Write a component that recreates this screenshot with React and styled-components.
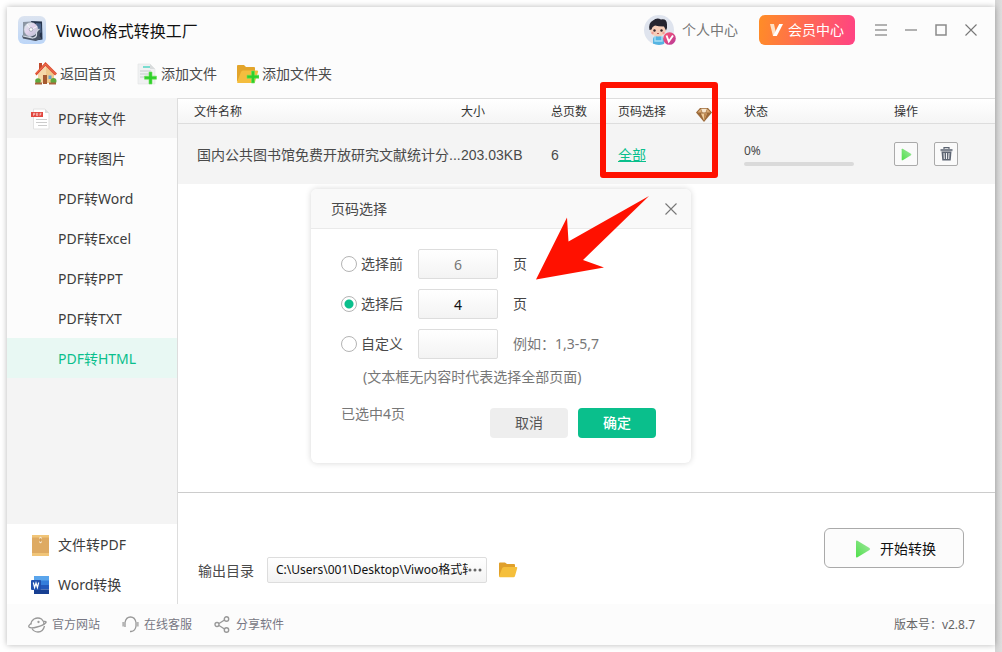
import React, { useState } from "react";
import styled, { createGlobalStyle, css } from "styled-components";

const sans = `"Noto Sans", "Noto Sans CJK SC", sans-serif`;
const line = "#dddddd";
const green = "#0abf8c";

const GlobalStyle = createGlobalStyle`
  *, *::before, *::after { box-sizing: border-box; }
  body { margin: 0; background: #fff; font: 14px/20px ${sans}; color: #4a4a4a; }
  button, input { font: inherit; color: inherit; margin: 0; }
  button { padding: 0; cursor: pointer; }
  svg { display: block; flex: none; }
`;

const Page = styled.div`
  min-height: 100vh;
  padding: 7px;
  display: flex;
  background: linear-gradient(to left, #dedede, #d4d4d4 7px, transparent 7px);
`;

const Window = styled.div`
  position: relative;
  flex: 1;
  min-width: 0;
  display: flex;
  flex-direction: column;
  background: #fcfcfc;
  box-shadow: 0 0 6px rgba(0, 0, 0, 0.28);
`;

const TitleBar = styled.header`
  display: flex;
  align-items: center;
  height: 46px;
  padding: 0 18px 0 11px;
`;

const Title = styled.h1`
  flex: 1;
  margin: 0 0 0 10px;
  padding-top: 2px;
  font-size: 16px;
  line-height: 24px;
  font-weight: 400;
  color: #111;
`;

const Account = styled.a`
  display: flex;
  align-items: center;
  gap: 6px;
  color: #777;
  text-decoration: none;
`;

const VipButton = styled.button`
  display: flex;
  align-items: center;
  justify-content: center;
  gap: 5px;
  width: 96px;
  height: 30px;
  margin: 0 20px 0 21px;
  border: 0;
  border-radius: 6px;
  color: #fff;
  background: linear-gradient(100deg, #ff8d26, #ff4285);
`;

const WindowControls = styled.div`
  display: flex;
  gap: 18px;
`;

const IconButton = styled.button`
  display: flex;
  border: 0;
  background: none;
`;

const Toolbar = styled.nav`
  display: flex;
  align-items: center;
  gap: 20px;
  height: 45px;
  padding: 0 27px 4px;
`;

const Tool = styled.button`
  display: flex;
  align-items: center;
  gap: 3px;
  border: 0;
  background: none;
`;

const Body = styled.div`
  flex: 1;
  display: grid;
  grid-template-columns: 171px minmax(0, 1fr);
`;

const Sidebar = styled.aside`
  display: flex;
  flex-direction: column;
  border-right: 1px solid ${line};
  background: #f4f4f4;
`;

const SideGroup = styled.div`
  background: ${(p) => (p.$bottom ? "#fff" : "#fcfcfc")};
  margin-top: ${(p) => (p.$bottom ? "auto" : "0")};
`;

const SideItem = styled.a`
  display: flex;
  align-items: center;
  gap: 7px;
  height: 40px;
  padding: 2px 0 0 ${(p) => (p.$sub ? "51px" : "24px")};
  color: #3c3c3c;
  text-decoration: none;
  ${(p) => p.$open && css`background: #f4f4f4;`}
  ${(p) => p.$active && css`color: ${green}; background: #e8f8f3;`}
`;

const Content = styled.main`
  position: relative;
  display: flex;
  flex-direction: column;
  background: #fff;
`;

const FileTable = styled.table`
  width: 100%;
  table-layout: fixed;
  border-collapse: separate;
  border-spacing: 0;
  text-align: left;
`;

const Th = styled.th`
  height: 26px;
  padding: 2px 0 0 ${(p) => (p.$first ? "16px" : "0")};
  width: ${(p) => p.$width || "auto"};
  border: solid ${line};
  border-width: 1px 0;
  background: linear-gradient(#fff, #f5f5f5);
  font-size: 12px;
  font-weight: 400;
  color: #333;
`;

const Td = styled.td`
  height: 60px;
  padding: ${(p) => (p.$controls ? "0" : "2px")} 0 0 ${(p) => (p.$first ? "19px" : "0")};
  background: #f4f4f4;
  font-family: "Liberation Sans", "Noto Sans CJK SC", sans-serif;
  white-space: nowrap;
`;

const ThSplit = styled.div`
  display: flex;
  align-items: flex-end;
  justify-content: space-between;
  padding-right: 32px;
`;

const PageLink = styled.a`
  color: ${green};
`;

const Progress = styled.div`
  padding-top: 2px;
  font: 12px/16px ${sans};
`;

const Track = styled.div`
  width: 110px;
  height: 4px;
  margin: 3px 0 4px;
  border-radius: 2px;
  background: #dadada;
`;

const Actions = styled.div`
  display: flex;
  gap: 16px;
`;

const SquareButton = styled.button`
  display: grid;
  place-items: center;
  width: 24px;
  height: 24px;
  border: 1px solid #aaa;
  border-radius: 2px;
  background: #fafafa;
`;

const Output = styled.section`
  display: flex;
  align-items: flex-start;
  justify-content: space-between;
  height: 112px;
  margin-top: auto;
  padding: 35px 31px 0 20px;
  border-top: 1px solid #ccc;
`;

const OutputField = styled.div`
  display: flex;
  align-items: center;
  gap: 12px;
  padding-top: 29px;
`;

const PathLabel = styled.label`
  padding: 2px 1px 0 0;
`;

const PathBox = styled.div`
  display: flex;
  align-items: center;
  width: 220px;
  height: 26px;
  padding: 0 4px 0 8px;
  border: 1px solid ${line};
  border-radius: 2px;
  background: linear-gradient(#fff, #f3f3f3);
`;

const PathInput = styled.input`
  flex: 1;
  min-width: 0;
  padding: 0;
  border: 0;
  background: none;
  font-size: 12px;
  line-height: 18px;
  color: #111;
`;

const StartButton = styled.button`
  display: flex;
  align-items: center;
  justify-content: center;
  gap: 9px;
  width: 140px;
  height: 40px;
  padding: 1px 0 0 3px;
  border: 1px solid #aaa;
  border-radius: 6px;
  background: #fcfcfc;
  color: #111;
`;

const Footer = styled.footer`
  display: flex;
  align-items: center;
  gap: 22px;
  height: 41px;
  padding: 0 20px 0 21px;
  font-size: 12px;
  color: #777;
`;

const FooterLink = styled.a`
  display: flex;
  align-items: center;
  gap: 5px;
  color: #777783;
  text-decoration: none;
`;

const Version = styled.span`
  margin-left: auto;
  color: #666;
`;

const Highlight = styled.div`
  position: absolute;
  top: -16px;
  right: 277px;
  width: 118px;
  height: 96px;
  border: 6px solid #ff1100;
  border-radius: 3px;
  pointer-events: none;
`;

const Dialog = styled.form`
  position: absolute;
  inset: 0;
  margin: auto;
  width: 380px;
  height: 274px;
  border-radius: 6px;
  background: #fff;
  box-shadow: 0 0 6px rgba(0, 0, 0, 0.16);
`;

const DialogHeader = styled.div`
  display: flex;
  align-items: center;
  justify-content: space-between;
  height: 40px;
  padding: 1px 14px 0 20px;
  border-bottom: 1px solid #eaeaea;
  border-radius: 6px 6px 0 0;
  background: #f9f9f9;
`;

const DialogBody = styled.div`
  display: flex;
  flex-direction: column;
  gap: 10px;
  padding: 20px 30px 0;
`;

const Option = styled.div`
  display: grid;
  grid-template-columns: 77px 80px 1fr;
  align-items: center;
`;

const RadioLabel = styled.label`
  display: flex;
  align-items: center;
  gap: 4px;
`;

const Radio = styled.input`
  appearance: none;
  width: 16px;
  height: 16px;
  border: 1px solid #b4b4b4;
  border-radius: 50%;
  background: #fff;
  &:checked {
    background: radial-gradient(circle, ${green} 4px, #fff 5px);
  }
`;

const PageInput = styled.input`
  width: 80px;
  height: 30px;
  padding: 0;
  border: 1px solid ${line};
  border-radius: 2px;
  background: linear-gradient(#fff, #f3f3f3);
  text-align: center;
  color: ${(p) => (p.$current ? "#111" : "#777")};
`;

const Unit = styled.span`
  padding-left: 15px;
  color: ${(p) => (p.$muted ? "#777" : "#444")};
`;

const Hint = styled.p`
  margin: -2px 0 0 22px;
  color: #777;
`;

const DialogFooter = styled.div`
  display: flex;
  gap: 10px;
  padding: 7px 5px 0 0;
`;

const Selected = styled.span`
  flex: 1;
  color: #777;
`;

const DialogButton = styled.button`
  width: 78px;
  height: 30px;
  margin-top: 4px;
  border: 0;
  border-radius: 4px;
  background: ${(p) => (p.$primary ? green : "#eeeeee")};
  color: ${(p) => (p.$primary ? "#fff" : "#555")};
  font-weight: ${(p) => (p.$primary ? 500 : 400)};
`;

const Pointer = styled.svg`
  position: absolute;
  top: 6px;
  right: 41px;
`;

const Logo = () => (
  <svg width="28" height="28" viewBox="0 0 28 28">
    <defs>
      <linearGradient id="lg" x1="0" y1="0" x2="0" y2="1"><stop offset="0" stopColor="#dce4f0" /><stop offset="1" stopColor="#bcd6f8" /></linearGradient>
      <linearGradient id="disc" x1="0" y1="0" x2="1" y2="1"><stop offset="0" stopColor="#d9f0ea" /><stop offset=".45" stopColor="#e2d2ec" /><stop offset="1" stopColor="#b9bfd0" /></linearGradient>
    </defs>
    <rect width="28" height="28" rx="6" fill="url(#lg)" />
    <path d="M5 6l8-.5V20l-8 1z" fill="#8b96a3" />
    <path d="M13 5l11 .5.5 18-7 1z" fill="#26344c" />
    <path d="M18 7l5 .5.5 9-5 1z" fill="#4a6287" />
    <circle cx="13" cy="13.500" r="7" fill="url(#disc)" stroke="#b9bfcb" strokeWidth=".5" />
    <path d="M13 13.500L9 8M13 13.500l6-3" stroke="#fff" strokeWidth="1" opacity=".8" />
    <circle cx="13" cy="13.500" r="1.800" fill="#fff" stroke="#9299a8" strokeWidth=".7" />
    <path d="M4 19.500l8 1.500 5-2 4-6 1.500 1-1 6 2 2.500-6 2.500L5 22.500z" fill="#4b5566" />
    <path d="M5 20l10 2.200M15 22q4-1 3.500-4t3-5" stroke="#d5dbe4" strokeWidth="1.200" fill="none" />
  </svg>
);

const Avatar = () => (
  <svg width="32" height="30" viewBox="0 0 32 30">
    <defs>
      <clipPath id="face"><circle cx="15" cy="15" r="15" /></clipPath>
      <linearGradient id="badge" x1="0" y1="0" x2="1" y2="1"><stop stopColor="#ff5570" /><stop offset="1" stopColor="#b6399b" /></linearGradient>
    </defs>
    <g clipPath="url(#face)">
      <rect width="30" height="30" fill="#dfe4ee" />
      <path d="M9 30v-6q0-3 5-3t6 3v6z" fill="#55b4e2" />
      <path d="M11 21v5h7v-5" fill="none" stroke="#a8def5" strokeWidth="1.4" />
      <ellipse cx="14" cy="15" rx="8" ry="6.500" fill="#f6cdb8" />
      <path d="M5.500 15Q4 8 9 5.500 13 2 17 4.500q6-1 6 5 .5 3-1 6l-2-4q-6 0-9-1-3 1-3.500 4z" fill="#252530" />
      <circle cx="10.500" cy="15.500" r="1.200" fill="#33232a" /><circle cx="17.500" cy="15.500" r="1.200" fill="#33232a" />
      <circle cx="8.500" cy="18" r="1.200" fill="#f29c94" /><circle cx="19.500" cy="18" r="1.200" fill="#f29c94" />
      <path d="M13 18.500h2" stroke="#b95a50" />
    </g>
    <circle cx="25.500" cy="23.500" r="6.300" fill="url(#badge)" />
    <path d="M22.500 20.500l2.300 6 4.200-6" fill="none" stroke="#fff" strokeWidth="1.900" />
  </svg>
);

const VipMark = () => (
  <svg width="13" height="12" viewBox="0 0 13 12">
    <path d="M0 0h4l1.500 7L4.500 12H3z" fill="#ffe0c4" />
    <path d="M3 12L9.200 0H13L6.800 12z" fill="#fff" />
  </svg>
);

const MenuIcon = () => (
  <svg width="12" height="12" viewBox="0 0 12 12"><path d="M0 1h12M0 6h12M0 11h12" stroke="#999" strokeWidth="1.500" /></svg>
);
const MinIcon = () => (
  <svg width="12" height="12" viewBox="0 0 12 12"><path d="M0 6h12" stroke="#999" strokeWidth="1.500" /></svg>
);
const MaxIcon = () => (
  <svg width="12" height="12" viewBox="0 0 12 12"><path d="M1 1h10v10H1z" fill="none" stroke="#8a8a8a" strokeWidth="1.500" /></svg>
);
const CloseIcon = () => (
  <svg width="12" height="12" viewBox="0 0 12 12"><path d="M.5.500l11 11M11.500.500l-11 11" stroke="#777" strokeWidth="1.100" /></svg>
);

const HomeIcon = () => (
  <svg width="23" height="23" viewBox="0 0 23 23">
    <path d="M5 1h3v7H5z" fill="#c0492c" />
    <path d="M4 12l8-8 8 8v9H4z" fill="#f6d9a8" />
    <path d="M12 5l8 7v9h-8z" fill="#f0c98c" />
    <path d="M11.500 0L23 11.500 21 13.500 11.500 4 2.500 13.500 1 11.500z" fill="#dc4d30" />
    <path d="M2 11.500L11.500 2 21.500 12" fill="none" stroke="#f58360" strokeWidth=".8" />
    <path d="M9 13h4v9H9z" fill="#a65a31" />
    <path d="M14.500 13.500h3v3.500h-3z" fill="#6ba3c9" />
    <circle cx="4" cy="19" r="2.800" fill="#5fa83f" /><circle cx="19.500" cy="19" r="3" fill="#5fa83f" />
    <path d="M1 21.500h7M15 21.500h7" stroke="#a9643c" strokeWidth="2" />
  </svg>
);

const Plus = () => <path d="M14 10h3v4.200h4.500v3H17V22h-3v-4.800H9.500v-3H14z" fill="#2fd02b" stroke="#6be35a" strokeWidth=".6" />;

const AddFileIcon = () => (
  <svg width="22" height="22" viewBox="0 0 22 22">
    <path d="M2 1h12l5 5v15H2z" fill="#f0f1f2" stroke="#e0e2e3" strokeWidth=".6" />
    <path d="M14 1l5 5h-5z" fill="#d8dbdc" />
    <path d="M7 4h7" stroke="#45d3c1" strokeWidth="1.400" />
    <path d="M4 8h11M4 11h9M4 14h7" stroke="#c6cbce" strokeWidth="1.100" />
    <g transform="translate(-1 -1)"><Plus /></g>
  </svg>
);

const AddFolderIcon = () => (
  <svg width="22" height="20" viewBox="0 0 22 20">
    <path d="M0 17V2q0-1 1-1h6l2 2h8q1 0 1 1v13z" fill="#e3a52b" />
    <path d="M0 18L4 8q.5-1.500 2-1.500h14q1.500 0 1 1.500l-3 10q-.5 1-1.500 1H1q-1 0-1-1z" fill="#f4bd3e" />
    <g transform="translate(.5 -3)"><Plus /></g>
  </svg>
);

const PdfIcon = () => (
  <svg width="20" height="22" viewBox="0 0 20 22">
    <path d="M2.500 1h11.500l4 4v16H2.500z" fill="#fff" stroke="#e2e2e2" />
    <path d="M14 1l4 4h-4z" fill="#ddd" />
    <path d="M0 4h12v5H0z" fill="#e2473f" />
    <path d="M2.500 7.800V5.300h1.300v1.300H2.500M5.500 5.300v2.300h1.200V5.300zM9 7.800V5.300h1.500M9 6.500h1.200" fill="none" stroke="#fbd5d2" strokeWidth=".7" />
    <path d="M5 11.500h11M5 14.500h11M7 17.500h9" stroke="#ccc" />
  </svg>
);

const ArchiveIcon = () => (
  <svg width="20" height="21" viewBox="0 0 20 21">
    <rect x="1" width="17" height="21" rx="1" fill="#deaa62" />
    <path d="M1 0h17v2.500H1zM1 18h17v3H1z" fill="#f1c578" />
    <circle cx="9.500" cy="3" r="1.200" fill="#f7ead2" /><circle cx="9.500" cy="7" r="1.200" fill="#f7ead2" />
    <path d="M9.500 3v4" stroke="#c58f49" strokeWidth=".7" />
  </svg>
);

const WordIcon = () => (
  <svg width="20" height="18" viewBox="0 0 20 18">
    <path d="M3 0h15v5H3z" fill="#5aa5ec" /><path d="M3 4.500h15V9H3z" fill="#347ddb" />
    <path d="M3 9h15v4.500H3z" fill="#2358bb" /><path d="M3 13.500h15V18H3z" fill="#173f92" />
    <rect y="4" width="10" height="10" rx="1" fill="#2150ae" />
    <path d="M2.300 6.500l1.300 5 1.400-4.500 1.400 4.500 1.300-5" fill="none" stroke="#fff" strokeWidth="1.200" />
  </svg>
);

const DiamondIcon = () => (
  <svg width="16" height="15" viewBox="0 0 16 15">
    <path d="M4 1h8l4 4.500L8 15 0 5.500z" fill="#9b6938" />
    <path d="M4.500 2L6 5.500H1.500zM11.500 2L10 5.500h4.500z" fill="#d8aa74" />
    <path d="M5 1.800h6L9.500 5.500h-3z" fill="#f7e5cb" />
    <path d="M5 6.500h6l-3 7z" fill="#efcc9a" /><path d="M8 6.500h3l-3 7z" fill="#bd8750" />
  </svg>
);

const PlayIcon = ({ size }) => (
  <svg width={size} height={size + 2} viewBox="0 0 16 18">
    <defs><linearGradient id="play" x1="0" y1="1" x2="1" y2="0"><stop stopColor="#4fe04a" /><stop offset="1" stopColor="#a3e6a2" /></linearGradient></defs>
    <path d="M1 1.500Q1 0 2.500.800L14.500 8q1.200 1 0 2L2.500 17.200Q1 18 1 16.500z" fill="url(#play)" />
  </svg>
);

const TrashIcon = () => (
  <svg width="13" height="14" viewBox="0 0 13 14">
    <path d="M4 2V.700h5V2" fill="none" stroke="#5b6370" strokeWidth="1.200" />
    <path d="M.5 2h12v2.200H.500z" fill="#7e8590" />
    <path d="M1.500 4.500h10l-.8 9H2.300z" fill="#5d6573" />
    <path d="M4 6l.3 6M6.500 6v6M9 6l-.3 6" stroke="#f1f2f4" strokeWidth="1" />
  </svg>
);

const FolderIcon = () => (
  <svg width="19" height="16" viewBox="0 0 19 16">
    <path d="M0 14V1.500q0-1 1-1h5l2 1.500h7q1 0 1 1V14z" fill="#e0a02b" />
    <path d="M0 14.500l3-8Q3.500 5 5 5h12.500q1 0 .7 1.200L16 14q-.4 1.200-1.500 1.200H1q-1 0-1-.700z" fill="#f5bf3b" />
  </svg>
);

const DotsIcon = () => (
  <svg width="14" height="4" viewBox="0 0 14 4"><g fill="#666"><circle cx="2" cy="2" r="1.500" /><circle cx="7" cy="2" r="1.500" /><circle cx="12" cy="2" r="1.500" /></g></svg>
);

const PlanetIcon = () => (
  <svg width="19" height="16" viewBox="0 0 19 16" fill="none" stroke="#999" strokeWidth="1.300">
    <path d="M3 7.500Q3 4 6 2q4-2 7.500 0 2.500 2 2.500 5.500M4 11.500q2 3.500 6 3.500 5 0 6.500-6" />
    <path d="M3 6.500Q0 8.800 1 10q1.500 1.700 8 0T18 5.500Q18.500 4.300 16 4.500" />
    <circle cx="10.500" cy="5" r=".5" />
  </svg>
);

const HeadsetIcon = () => (
  <svg width="17" height="17" viewBox="0 0 17 17" fill="none" stroke="#999" strokeWidth="1.300">
    <path d="M3 11V6.500Q4 1 8.500 1T14 6.500V10q-.5 5-5 5.500H8" />
    <path d="M1.500 6v4.500M15.500 6v4.500" stroke="#b5b5b5" strokeWidth="2.400" />
  </svg>
);

const ShareIcon = () => (
  <svg width="17" height="17" viewBox="0 0 17 17" fill="none" stroke="#999" strokeWidth="1.400">
    <circle cx="3" cy="8.500" r="2" /><circle cx="12.500" cy="3" r="2.200" /><circle cx="12.500" cy="14" r="2.200" />
    <path d="M5 7.500L10.500 4M5 9.500l5.500 3.500" />
  </svg>
);

const formats = ["PDF转图片", "PDF转Word", "PDF转Excel", "PDF转PPT", "PDF转TXT", "PDF转HTML"];

export default function App() {
  const [mode, setMode] = useState("last");
  const radio = (value) => ({
    type: "radio",
    name: "range",
    checked: mode === value,
    onChange: () => setMode(value),
  });

  return (
    <Page>
      <GlobalStyle />
      <Window>
        <TitleBar>
          <Logo />
          <Title>Viwoo格式转换工厂</Title>
          <Account href="#account"><Avatar />个人中心</Account>
          <VipButton><VipMark />会员中心</VipButton>
          <WindowControls>
            <IconButton aria-label="菜单"><MenuIcon /></IconButton>
            <IconButton aria-label="最小化"><MinIcon /></IconButton>
            <IconButton aria-label="最大化"><MaxIcon /></IconButton>
            <IconButton aria-label="关闭"><CloseIcon /></IconButton>
          </WindowControls>
        </TitleBar>

        <Toolbar>
          <Tool><HomeIcon />返回首页</Tool>
          <Tool><AddFileIcon />添加文件</Tool>
          <Tool><AddFolderIcon />添加文件夹</Tool>
        </Toolbar>

        <Body>
          <Sidebar>
            <SideGroup>
              <SideItem href="#pdf" $open><PdfIcon />PDF转文件</SideItem>
              {formats.map((name) => (
                <SideItem key={name} href={`#${name}`} $sub $active={name === "PDF转HTML"}>{name}</SideItem>
              ))}
            </SideGroup>
            <SideGroup $bottom>
              <SideItem href="#to-pdf"><ArchiveIcon />文件转PDF</SideItem>
              <SideItem href="#word"><WordIcon />Word转换</SideItem>
            </SideGroup>
          </Sidebar>

          <Content>
            <FileTable>
              <thead>
                <tr>
                  <Th $first>文件名称</Th>
                  <Th $width="90px">大小</Th>
                  <Th $width="67px">总页数</Th>
                  <Th $width="126px"><ThSplit>页码选择<DiamondIcon /></ThSplit></Th>
                  <Th $width="150px">状态</Th>
                  <Th $width="101px">操作</Th>
                </tr>
              </thead>
              <tbody>
                <tr>
                  <Td $first>国内公共图书馆免费开放研究文献统计分...</Td>
                  <Td>203.03KB</Td>
                  <Td>6</Td>
                  <Td><PageLink href="#pages">全部</PageLink></Td>
                  <Td><Progress>0%<Track /></Progress></Td>
                  <Td $controls>
                    <Actions>
                      <SquareButton aria-label="开始"><PlayIcon size={11} /></SquareButton>
                      <SquareButton aria-label="删除"><TrashIcon /></SquareButton>
                    </Actions>
                  </Td>
                </tr>
              </tbody>
            </FileTable>

            <Output>
              <OutputField>
                <PathLabel htmlFor="path">输出目录</PathLabel>
                <PathBox>
                  <PathInput id="path" defaultValue="C:\Users\001\Desktop\Viwoo格式转换工厂" />
                  <IconButton aria-label="浏览"><DotsIcon /></IconButton>
                </PathBox>
                <IconButton aria-label="打开目录"><FolderIcon /></IconButton>
              </OutputField>
              <StartButton><PlayIcon size={16} />开始转换</StartButton>
            </Output>
            <Highlight />
          </Content>
        </Body>

        <Footer>
          <FooterLink href="#site"><PlanetIcon />官方网站</FooterLink>
          <FooterLink href="#service"><HeadsetIcon />在线客服</FooterLink>
          <FooterLink href="#share"><ShareIcon />分享软件</FooterLink>
          <Version>版本号：v2.8.7</Version>
        </Footer>

        <Dialog onSubmit={(e) => e.preventDefault()}>
          <DialogHeader>
            页码选择
            <IconButton type="button" aria-label="关闭"><CloseIcon /></IconButton>
          </DialogHeader>
          <DialogBody>
            <Option>
              <RadioLabel><Radio {...radio("first")} />选择前</RadioLabel>
              <PageInput aria-label="选择前页数" defaultValue="6" />
              <Unit>页</Unit>
            </Option>
            <Option>
              <RadioLabel><Radio {...radio("last")} />选择后</RadioLabel>
              <PageInput aria-label="选择后页数" defaultValue="4" $current />
              <Unit>页</Unit>
            </Option>
            <Option>
              <RadioLabel><Radio {...radio("custom")} />自定义</RadioLabel>
              <PageInput aria-label="自定义页码" />
              <Unit $muted>例如：1,3-5,7</Unit>
            </Option>
            <Hint>(文本框无内容时代表选择全部页面)</Hint>
            <DialogFooter>
              <Selected>已选中4页</Selected>
              <DialogButton type="button">取消</DialogButton>
              <DialogButton $primary>确定</DialogButton>
            </DialogFooter>
          </DialogBody>
          <Pointer width="115" height="86" viewBox="0 0 115 86" aria-hidden="true">
            <path d="M114 1L48 65l21 7.500L1 84.500 32 22.500l1.500 24z" fill="#ff1100" />
          </Pointer>
        </Dialog>
      </Window>
    </Page>
  );
}
